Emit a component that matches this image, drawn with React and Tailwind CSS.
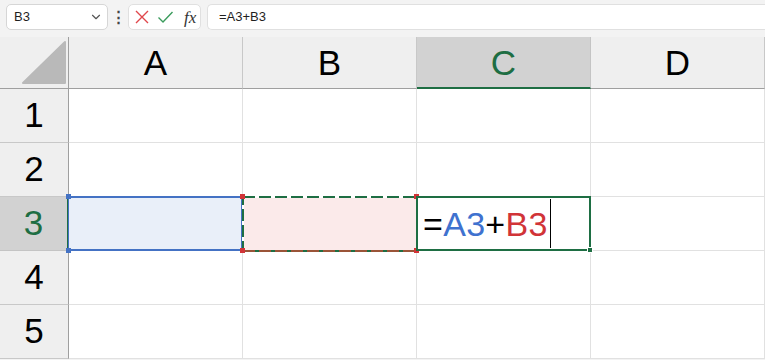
import { ChevronDown } from 'lucide-react';

const cols = ['A', 'B', 'C', 'D'];
const rows = [1, 2, 3, 4, 5];

const Corner = ({ className }) => (
  <span className={`absolute w-[5px] h-[5px] ${className}`} />
);

const Toolbar = () => (
  <div className="h-[37px] flex items-start pt-[4px] pl-[6px] gap-0">
    <div className="w-[102px] h-[26px] bg-white border border-[#d6d6d6] rounded-[5px] flex items-center justify-between pl-[7px] pr-[4px]">
      <span className="text-[13px] text-[#1f1f1f]">B3</span>
      <ChevronDown className="w-[14px] h-[14px] text-[#555]" strokeWidth={2} />
    </div>
    <div className="w-[20px] h-[26px] flex items-center justify-center text-[#444] text-[15px] font-bold">⋮</div>
    <div className="w-[73px] h-[26px] bg-white border border-[#e0e0e0] rounded-[5px] flex items-center pl-[5px] gap-[7px]">
      <svg width="16" height="16" viewBox="0 0 16 16" className="shrink-0">
        <path d="M2 2 L14 14 M14 2 L2 14" stroke="#e0474c" strokeWidth="1.4" fill="none" />
      </svg>
      <svg width="17" height="16" viewBox="0 0 17 16" className="shrink-0">
        <path d="M1.5 8.5 L6 13 L15.5 3" stroke="#3a9b5c" strokeWidth="1.4" fill="none" />
      </svg>
      <span className="text-[17px] italic text-[#333] font-['Liberation_Serif',serif] ml-[3px] leading-none">fx</span>
    </div>
    <div className="ml-[6px] flex-1 h-[26px] bg-white border border-[#e0e0e0] rounded-l-[5px] border-r-0 flex items-center pl-[11px]">
      <span className="text-[13px] text-[#1f1f1f]">=A3+B3</span>
    </div>
  </div>
);

export default function App() {
  return (
    <div className="w-[765px] h-[360px] overflow-hidden bg-[#f3f3f3] font-['Liberation_Sans',Arial,sans-serif]">
      <Toolbar />
      <div className="grid grid-cols-[69px_174px_174px_174px_174px] grid-rows-[52px_54px_54px_54px_54px_54px]">
        <div className="relative bg-[#efefef] border-r border-b border-[#9f9f9f]">
          <svg width="46" height="44" viewBox="0 0 46 44" className="absolute left-[21px] top-[3px]">
            <path d="M44 2 L44 43 L2 43 Z" fill="#b9b9b9" stroke="#b9b9b9" strokeWidth="2" strokeLinejoin="round" />
          </svg>
        </div>
        {cols.map((c) => (
          <div
            key={c}
            className={
              c === 'C'
                ? 'bg-[#d2d2d2] border-r border-[#c4c4c4] border-b-2 border-b-[#1e6e43] flex items-center justify-center text-[35px] text-[#1e6e43]'
                : 'bg-[#efefef] border-r border-b border-r-[#c8c8c8] border-b-[#9f9f9f] flex items-center justify-center text-[35px] text-black'
            }
          >
            <span className="pt-[2px]">{c}</span>
          </div>
        ))}
        {rows.map((r) => (
          <Row key={r} r={r} />
        ))}
      </div>
    </div>
  );
}

const Row = ({ r }) => {
  const active = r === 3;
  return (
    <>
      <div
        className={
          active
            ? 'bg-[#d2d2d2] border-b border-b-[#c4c4c4] border-r-2 border-r-[#1e6e43] flex items-center justify-center text-[35px] text-[#1e6e43]'
            : 'bg-[#efefef] border-b border-r border-b-[#c8c8c8] border-r-[#9f9f9f] flex items-center justify-center text-[35px] text-black'
        }
      >
        {r}
      </div>
      {cols.map((c) => {
        if (active && c === 'A') {
          return (
            <div key={c} className="relative bg-[#e9eff9] border-r border-b border-[#e1e1e1]">
              <div className="absolute -top-px -left-px -right-px -bottom-px border-t-2 border-b-2 border-r-2 border-l border-[#4472c4]" />
              <Corner className="bg-[#4472c4] -top-[3px] -left-[3px]" />
              <Corner className="bg-[#4472c4] -bottom-[3px] -left-[3px]" />
            </div>
          );
        }
        if (active && c === 'B') {
          return (
            <div key={c} className="relative bg-[#fbeaea] border-r border-b border-[#e1e1e1]">
              <svg className="absolute -top-px -left-px" width="176" height="56" viewBox="0 0 176 56">
                <rect x="1" y="1" width="174" height="54" fill="none" stroke="#ffffff" strokeWidth="2" />
                <rect x="1" y="1" width="174" height="54" fill="none" stroke="#1e6e43" strokeWidth="2" strokeDasharray="12 4" />
                <line x1="1" y1="55" x2="175" y2="55" stroke="#9a5438" strokeWidth="2" strokeDasharray="12 4" />
              </svg>
              <Corner className="bg-[#d13438] -top-[3px] -left-[3px]" />
              <Corner className="bg-[#d13438] -top-[3px] -right-[3px]" />
              <Corner className="bg-[#d13438] -bottom-[3px] -left-[3px]" />
              <Corner className="bg-[#d13438] -bottom-[3px] -right-[3px]" />
            </div>
          );
        }
        if (active && c === 'C') {
          return (
            <div key={c} className="relative bg-white border-r border-b border-[#e1e1e1] flex items-center">
              <div className="absolute -top-px -left-px -right-px -bottom-px border-2 border-[#1e6e43]" />
              <Corner className="bg-[#1e6e43] -bottom-[3px] -right-[3px] border border-white w-[6px] h-[6px]" />
              <span className="relative pl-[6px] text-[34px] leading-none tracking-[0.3px]">
                <span className="text-black">=</span>
                <span className="text-[#3f72cf]">A3</span>
                <span className="text-black">+</span>
                <span className="text-[#d13438]">B3</span>
              </span>
              <span className="relative ml-[2px] w-px h-[49px] bg-black" />
            </div>
          );
        }
        return <div key={c} className="bg-white border-r border-b border-[#e1e1e1]" />;
      })}
    </>
  );
};
